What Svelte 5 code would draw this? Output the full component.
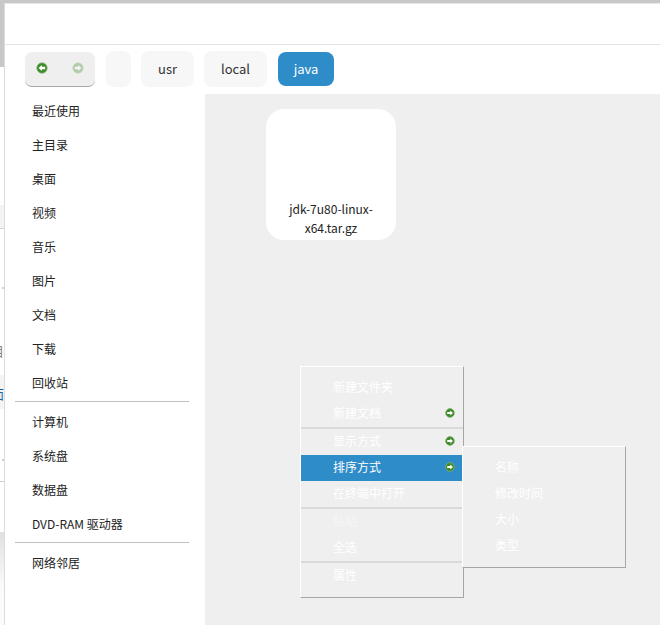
<script>
  const group1 = ['最近使用','主目录','桌面','视频','音乐','图片','文档','下载','回收站'];
  const group2 = ['计算机','系统盘','数据盘','DVD-RAM 驱动器'];
  const group3 = ['网络邻居'];
  const crumbs = ['usr','local'];
  const menu = [
    [{t:'新建文件夹'},{t:'新建文档',arrow:true}],
    [{t:'显示方式',arrow:true},{t:'排序方式',arrow:true,active:true},{t:'在终端中打开'}],
    [{t:'粘贴',disabled:true},{t:'全选'}],
    [{t:'属性'}]
  ];
  const sub = ['名称','修改时间','大小','类型'];
</script>

{#snippet arrow(dir, faded)}
  <svg class="ic" class:faded width="12" height="12" viewBox="0 0 12 12">
    <circle cx="6" cy="6" r="5.2" fill="#3f8a2c"/>
    <circle cx="6" cy="6" r="5.2" fill="none" stroke="#7fb36c" stroke-width="0.8"/>
    {#if dir === 'left'}
      <path d="M2.6 6 L5.8 2.9 V4.8 H9.2 V7.2 H5.8 V9.1 Z" fill="#fff"/>
    {:else}
      <path d="M9.4 6 L6.2 2.9 V4.8 H2.8 V7.2 H6.2 V9.1 Z" fill="#fff"/>
    {/if}
  </svg>
{/snippet}

{#snippet miniArrow()}
  <svg class="mini" width="10" height="10" viewBox="0 0 10 10">
    <circle cx="5" cy="5" r="4.4" fill="#3f8a2c"/>
    <circle cx="5" cy="5" r="4.4" fill="none" stroke="#83b572" stroke-width="0.7"/>
    <path d="M8 5 L5.3 2.5 V4 H2.2 V6 H5.3 V7.5 Z" fill="#fff"/>
  </svg>
{/snippet}

<div class="stage">
  <div class="backdrop">
    <i class="bd top"></i><i class="bd a"></i><i class="bd b"></i>
    <i class="bd upper"></i><i class="bd panel"></i>
    <i class="bd dot d1"></i><i class="bd dot d2"></i><i class="bd rule"></i>
    <span class="glyph g1">目</span><span class="glyph g2">面</span>
  </div>
  <div class="window">
    <header class="titlebar"></header>
    <nav class="toolbar">
      <div class="navbtn">
        {@render arrow('left', false)}
        {@render arrow('right', true)}
      </div>
      <div class="crumb root"></div>
      {#each crumbs as c}<div class="crumb">{c}</div>{/each}
      <div class="crumb current">java</div>
    </nav>
    <div class="body">
      <aside class="side">
        <ul>{#each group1 as g}<li>{g}</li>{/each}</ul>
        <hr />
        <ul>{#each group2 as g}<li>{g}</li>{/each}</ul>
        <hr />
        <ul>{#each group3 as g}<li>{g}</li>{/each}</ul>
      </aside>
      <main class="files">
        <div class="file"><span>jdk-7u80-linux-<br />x64.tar.gz</span></div>
        <div class="menu">
          {#each menu as grp, i}
            {#if i > 0}<div class="sep"></div>{/if}
            {#each grp as m}
              <div class="mi" class:active={m.active} class:disabled={m.disabled}>
                <span>{m.t}</span>
                {#if m.arrow}{@render miniArrow()}{/if}
              </div>
            {/each}
          {/each}
        </div>
        <div class="menu submenu">
          {#each sub as s}<div class="mi"><span>{s}</span></div>{/each}
        </div>
      </main>
    </div>
  </div>
</div>

<style>
  :global(body) { margin: 0; background: #fff; }
  .stage {
    position: relative; width: 660px; height: 625px; overflow: hidden;
    font-family: "Noto Sans CJK SC", "Noto Sans", sans-serif;
    font-size: 12px; color: #222; background: #fff;
  }
  .backdrop { position: absolute; inset: 0; background: #fff; }
  .bd { position: absolute; left: 0; width: 4px; display: block; }
  .bd.top { top: 0; width: 100%; height: 3px; background: #c8c8c8; }
  .bd.a { top: 0; height: 67px; background: #c8c8c8; }
  .bd.b { top: 532px; height: 93px; background: linear-gradient(#e0e0e0, #fbfbfb 60%); }
  .bd.upper { top: 205px; height: 23px; background: #f3f3f3; border-bottom: 1px solid #d4d4d4; }
  .bd.panel { top: 375px; height: 34px; background: #f4f4f4; }
  .bd.dot { left: 2px; width: 2px; height: 2px; background: #cfcfcf; }
  .d1 { top: 287px; }
  .d2 { top: 459px; }
  .bd.rule { top: 481px; height: 1px; background: #d0d0d0; }
  .glyph { position: absolute; font-size: 13px; line-height: 15px; }
  .g1 { left: -9px; top: 343px; color: #8a8078; }
  .g2 { left: -9px; top: 386px; color: #1d5f9c; }
  .window {
    position: absolute; left: 4px; top: 3px; width: 656px; height: 622px;
    background: #fff; border-left: 1px solid #dcdcdc; border-top: 1px solid #e6e6e6;
    display: flex; flex-direction: column; box-sizing: border-box;
  }
  .titlebar { height: 40px; flex: none; border-bottom: 1px solid #e4e4e4; }
  .toolbar {
    flex: none; height: 49px; box-sizing: border-box; display: flex; align-items: flex-start;
    padding: 6px 0 0 20px; gap: 10px;
  }
  .navbtn {
    width: 70px; height: 35px; margin-top: 1px; box-sizing: border-box; background: #efefef; border-radius: 7px;
    border-bottom: 1px solid #a8a8a8; display: flex; align-items: center; gap: 24px;
    padding: 0 0 2px 11px; margin-right: 1px;
  }
  .faded { opacity: .35; }
  .crumb {
    height: 36px; min-width: 25px; box-sizing: border-box; background: #f7f7f7; border-radius: 8px;
    display: flex; align-items: center; justify-content: center; font-size: 13px; color: #333;
    padding-bottom: 1px;
  }
  .crumb:nth-child(3) { width: 53px; }
  .crumb:nth-child(4) { width: 63px; }
  .crumb.current { width: 56px; height: 34px; margin: 1px 0 0 1px; background: #2e8cc9; color: #fff; }
  .body { flex: 1; display: flex; min-height: 0; }
  .side { width: 200px; flex: none; }
  .side ul { list-style: none; margin: 0; padding: 0; }
  .side li { height: 34px; line-height: 34px; padding-left: 27px; color: #222; white-space: nowrap; }
  .side hr { border: 0; height: 1px; background: #c0c0c0; margin: 1px 16px 3px 10px; }
  .files { flex: 1; background: #efefef; position: relative; }
  .file {
    position: absolute; left: 61px; top: 15px; width: 130px; height: 131px; background: #fff;
    border-radius: 18px; display: flex; align-items: flex-end; justify-content: center;
    text-align: center; box-sizing: border-box; padding-bottom: 3px;
    font-size: 12px; line-height: 19px; color: #222;
  }
  .menu {
    position: absolute; left: 95px; top: 272px; width: 164px; height: 232px; box-sizing: border-box;
    background: #efefef; color: #fff; padding-top: 8px;
    border-left: 1px solid #fff; border-top: 1px solid #fff;
    border-right: 1px solid #a6a6a6; border-bottom: 1px solid #a6a6a6;
  }
  .submenu { left: 257px; top: 352px; width: 164px; height: 122px; }
  .mi {
    height: 26px; box-sizing: border-box; display: flex; align-items: center; justify-content: space-between;
    padding: 0 8px 2px 32px; font-size: 12px; color: #fff;
  }
  .mi span { margin-bottom: 2px; }
  .mi.active { background: #2e8cc9; color: #fff; }
  .mi.disabled { color: #f6f6f6; }
  .sep { height: 2px; background: #d9d9d9; }
  .mini { flex: none; }
</style>
